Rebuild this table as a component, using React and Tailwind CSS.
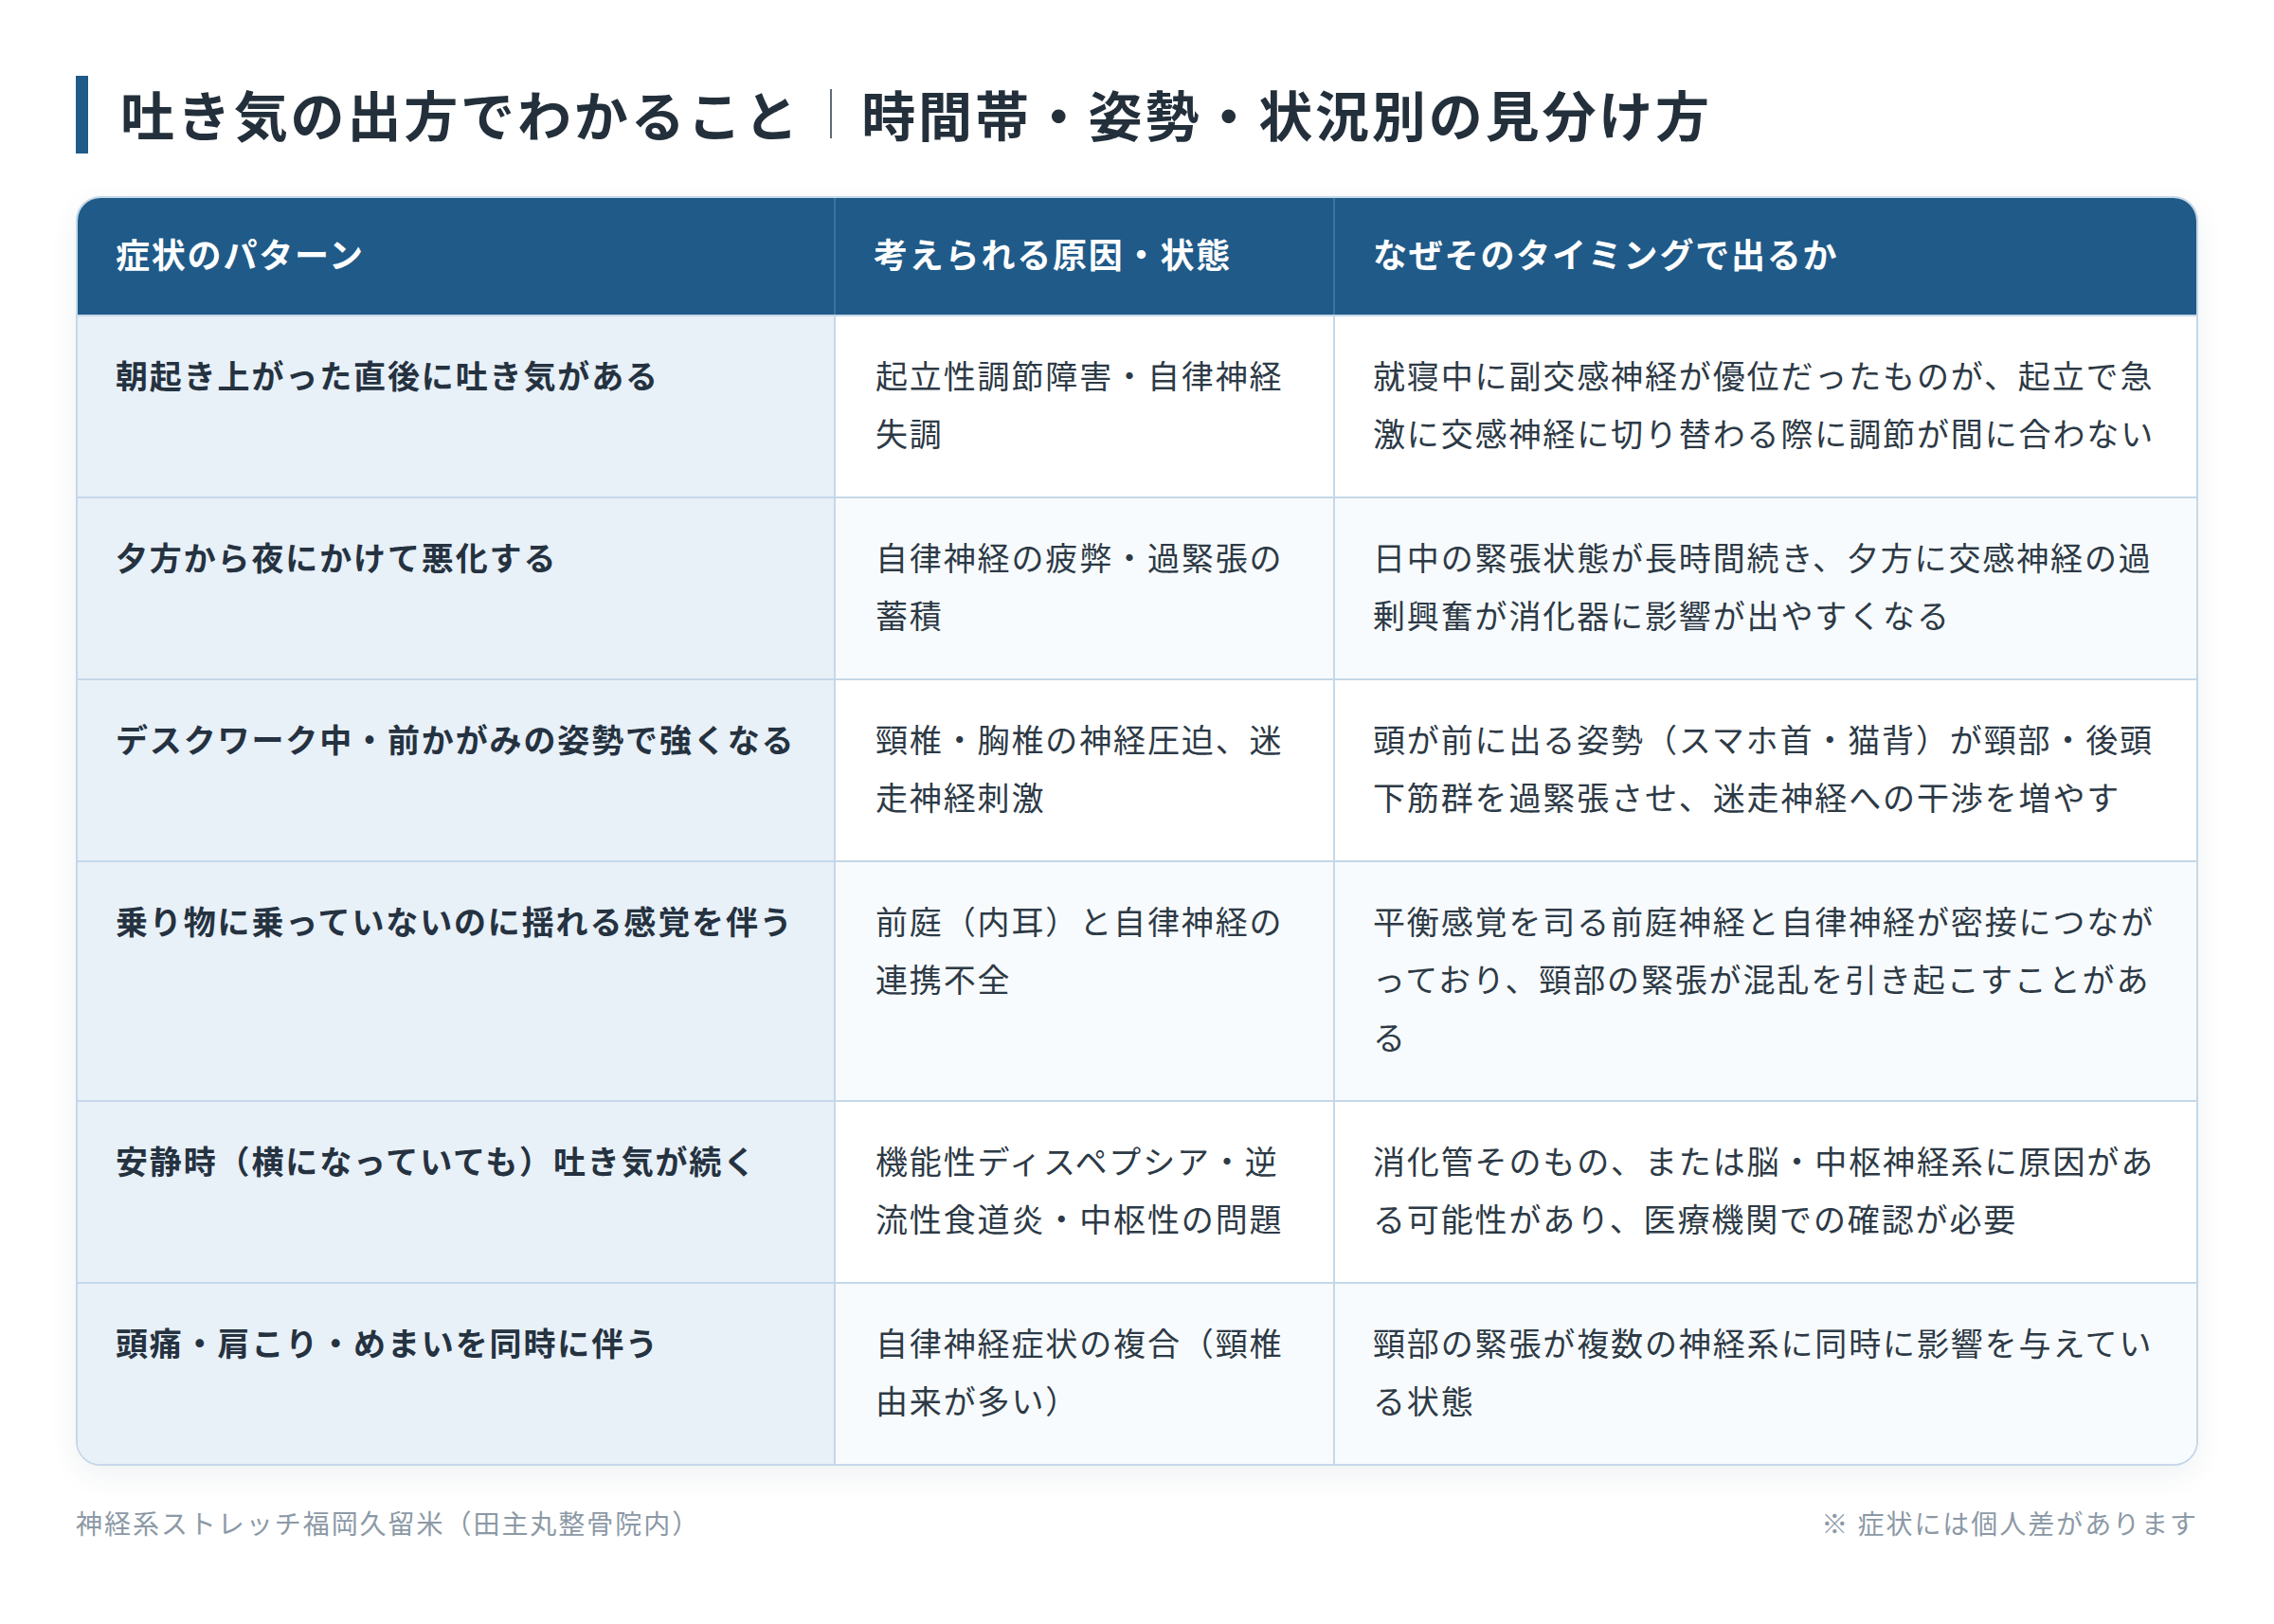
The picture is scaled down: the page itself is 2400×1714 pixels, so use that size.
import React from "react";

const rows = [
  {
    a: "朝起き上がった直後に吐き気がある",
    b: "起立性調節障害・自律神経失調",
    c: "就寝中に副交感神経が優位だったものが、起立で急激に交感神経に切り替わる際に調節が間に合わない",
  },
  {
    a: "夕方から夜にかけて悪化する",
    b: "自律神経の疲弊・過緊張の蓄積",
    c: "日中の緊張状態が長時間続き、夕方に交感神経の過剰興奮が消化器に影響が出やすくなる",
  },
  {
    a: "デスクワーク中・前かがみの姿勢で強くなる",
    b: "頸椎・胸椎の神経圧迫、迷走神経刺激",
    c: "頭が前に出る姿勢（スマホ首・猫背）が頸部・後頭下筋群を過緊張させ、迷走神経への干渉を増やす",
  },
  {
    a: "乗り物に乗っていないのに揺れる感覚を伴う",
    b: "前庭（内耳）と自律神経の連携不全",
    c: "平衡感覚を司る前庭神経と自律神経が密接につながっており、頸部の緊張が混乱を引き起こすことがある",
  },
  {
    a: "安静時（横になっていても）吐き気が続く",
    b: "機能性ディスペプシア・逆流性食道炎・中枢性の問題",
    c: "消化管そのもの、または脳・中枢神経系に原因がある可能性があり、医療機関での確認が必要",
  },
  {
    a: "頭痛・肩こり・めまいを同時に伴う",
    b: "自律神経症状の複合（頸椎由来が多い）",
    c: "頸部の緊張が複数の神経系に同時に影響を与えている状態",
  },
];

export default function App() {
  return (
    <div
      className="w-[2400px] min-h-[1714px] bg-white px-[80px] pt-[80px] text-[#2d3a46]"
      style={{ fontFamily: '"Noto Sans CJK JP", "Noto Sans", sans-serif' }}
    >
      <div className="flex items-center h-[82px]">
        <div className="w-[13px] h-[82px] bg-[#1f5a88]" />
        <h1 className="ml-[34px] -mt-[3px] text-[57px] font-bold tracking-[0.05em] text-[#23303b] leading-none flex items-center">
          <span>吐き気の出方でわかること</span>
          <span className="inline-block w-[2px] h-[52px] bg-[#3a4651] mx-[31px] opacity-80" />
          <span>時間帯・姿勢・状況別の見分け方</span>
        </h1>
      </div>

      <div className="mt-[45px] border-2 border-[#c5d8e8] rounded-[26px] overflow-hidden shadow-[0_10px_30px_rgba(30,60,90,0.07)]">
        <div className="grid grid-cols-[798px_527px_1fr] bg-[#1f5a88] text-white text-[36px] font-bold tracking-[0.05em] leading-[44px]">
          <div className="px-[40px] pt-[36px] pb-[43px]">症状のパターン</div>
          <div className="px-[40px] pt-[36px] pb-[43px] border-l-2 border-[#3d729c]">考えられる原因・状態</div>
          <div className="px-[40px] pt-[36px] pb-[43px] border-l-2 border-[#3d729c]">なぜそのタイミングで出るか</div>
        </div>
        {rows.map((r, i) => (
          <div
            key={i}
            className={`grid grid-cols-[798px_527px_1fr] border-t-2 border-[#c5d8e8] text-[34px] tracking-[0.055em] leading-[61px] ${
              i % 2 === 1 ? "bg-[#f8fbfd]" : "bg-white"
            }`}
          >
            <div className="bg-[#e8f0f8] px-[40px] pt-[31px] pb-[37px] font-bold text-[#253240] whitespace-nowrap">
              {r.a}
            </div>
            <div className="border-l-2 border-[#c5d8e8] pl-[42px] pr-[38px] pt-[31px] pb-[37px]">{r.b}</div>
            <div className="border-l-2 border-[#c5d8e8] pl-[40px] pr-[38px] pt-[31px] pb-[37px]">{r.c}</div>
          </div>
        ))}
      </div>

      <div className="mt-[40px] flex justify-between text-[28px] tracking-[0.07em] leading-[40px] text-[#8c99a6]">
        <span>神経系ストレッチ福岡久留米（田主丸整骨院内）</span>
        <span>※ 症状には個人差があります</span>
      </div>
    </div>
  );
}
